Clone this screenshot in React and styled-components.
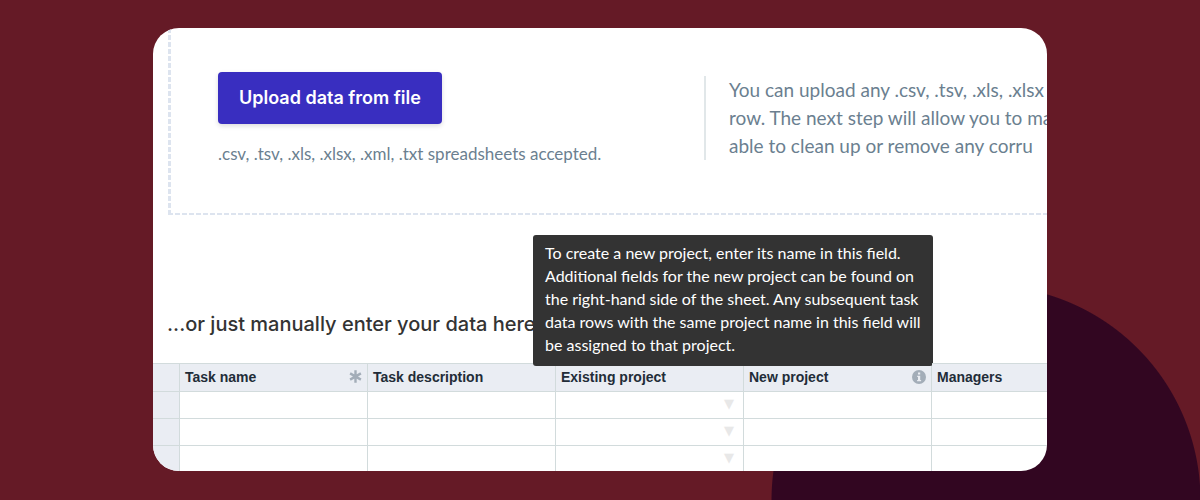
import React from 'react';
import styled, { createGlobalStyle } from 'styled-components';

const columns = [
    { name: 'Task name', required: true },
    { name: 'Task description' },
    { name: 'Existing project', select: true },
    {
        name: 'New project',
        info: 'To create a new project, enter its name in this field. Additional fields for the new project can be found on the right-hand side of the sheet. Any subsequent task data rows with the same project name in this field will be assigned to that project.',
    },
    { name: 'Managers' },
];

const rows = [1, 2, 3];

const AsteriskIcon = () => (
    <svg width="13" height="14" viewBox="0 0 13 14" aria-hidden="true">
        <path d="M6.500 0.300v12.400M1.100 3.400l10.800 6.200M11.900 3.400l-10.800 6.200" stroke="#a3adb8" strokeWidth="2.400" fill="none" />
    </svg>
);

const InfoIcon = () => (
    <svg width="14" height="14" viewBox="0 0 14 14" aria-hidden="true">
        <circle cx="7" cy="7" r="7" fill="#a3adb8" />
        <path d="M6 2.500h2.200v2H6zM5.200 5.700h3v4.300h.9v1.300H5.100V10h.9V7h-.8z" fill="#ebeef3" />
    </svg>
);

const App = () => (
    <Page>
        <GlobalStyle />
        <Card>
            <DropZone>
                <UploadColumn>
                    <UploadButton type="button">Upload data from file</UploadButton>
                    <Formats>.csv, .tsv, .xls, .xlsx, .xml, .txt spreadsheets accepted.</Formats>
                </UploadColumn>
                <Help>
                    You can upload any .csv, .tsv, .xls, .xlsx<br />
                    row. The next step will allow you to ma<br />
                    able to clean up or remove any corru
                </Help>
            </DropZone>
            <Heading>...or just manually enter your data here</Heading>
            <Sheet>
                <thead>
                    <tr>
                        <RowHead as="td" />
                        {columns.map(column => (
                            <ColumnHead key={column.name} scope="col">
                                <HeadContent>
                                    {column.name}
                                    {column.required && <AsteriskIcon />}
                                    {column.info && <InfoIcon />}
                                </HeadContent>
                                {column.info && <Tooltip role="tooltip">{column.info}</Tooltip>}
                            </ColumnHead>
                        ))}
                    </tr>
                </thead>
                <tbody>
                    {rows.map(row => (
                        <tr key={row}>
                            <RowHead as="td" />
                            {columns.map(column => (
                                <Cell key={column.name}>{column.select && '▼'}</Cell>
                            ))}
                        </tr>
                    ))}
                </tbody>
            </Sheet>
        </Card>
    </Page>
);

export default App;

const GlobalStyle = createGlobalStyle`
    body {
        margin: 0;
        background: #651a26;
    }
    * {
        box-sizing: border-box;
    }
`

const Page = styled.main`
    min-height: 100vh;
    padding: 28px 153px;
    background: radial-gradient(circle at calc(100% - 214px) 100%, #320621 214px, #651a26 215px);
    font-family: Inter, "Liberation Sans", sans-serif;
`

const Card = styled.section`
    overflow: hidden;
    border-radius: 26px;
    background: #fff;
`

const DropZone = styled.div`
    display: flex;
    align-items: flex-start;
    width: 1100px;
    height: 187px;
    margin-left: 15px;
    padding: 44px 48px;
    background:
        repeating-linear-gradient(to bottom, #dde4ef 0 5px, transparent 5px 7px) left / 3px 100% no-repeat,
        repeating-linear-gradient(to right, #dde4ef 0 5px, transparent 5px 7px) bottom / 100% 2px no-repeat;
`

const UploadColumn = styled.div`
    flex: 0 0 488px;
    padding-left: 2px;
`

const UploadButton = styled.button`
    height: 52px;
    padding: 0 21px;
    border: 0;
    border-radius: 4px;
    background: #392ec0;
    box-shadow: 0 2px 5px rgba(0, 0, 0, 0.14);
    color: #fff;
    font: 600 18px/24px Inter, sans-serif;
    white-space: nowrap;
`

const Formats = styled.p`
    margin: 18px 0 0;
    color: #6b7f90;
    font-family: Lato, sans-serif;
    font-size: 17px;
    line-height: 24px;
    white-space: nowrap;
`

const Help = styled.p`
    flex: none;
    margin: 4px 0 0;
    padding-left: 23px;
    border-left: 2px solid #e1e7e9;
    color: #6b7f90;
    font-family: Lato, sans-serif;
    font-size: 19px;
    line-height: 28px;
    white-space: nowrap;
`

const Heading = styled.h2`
    margin: 93px 0 23px 14px;
    color: #333;
    font-size: 20px;
    font-weight: 500;
    line-height: 32px;
`

const Sheet = styled.table`
    width: 967px;
    table-layout: fixed;
    border-spacing: 0;
`

const RowHead = styled.th`
    width: 27px;
    padding: 0;
    border-right: 1px solid #d2dbdc;
    border-top: 1px solid #d2dbdc;
    background: #eaedf3;
`

const ColumnHead = styled.th`
    position: relative;
    height: 28px;
    padding: 0 5px 2px;
    border-right: 1px solid #d2dbdc;
    border-top: 1px solid #d2dbdc;
    background: #eaedf3;
    color: #222c38;
    font: bold 14px/20px "Liberation Sans", sans-serif;
    text-align: left;
`

const HeadContent = styled.div`
    display: flex;
    align-items: center;
    justify-content: space-between;
`

const Tooltip = styled.div`
    position: absolute;
    right: -2px;
    bottom: calc(100% - 2px);
    width: 400px;
    padding: 6px 12px 10px;
    border-radius: 3px;
    background: #333;
    color: #fff;
    font: 400 16px/23px Lato, sans-serif;
`

const Cell = styled.td`
    height: 27px;
    padding: 0 9px 2px;
    border-right: 1px solid #d2dbdc;
    border-top: 1px solid #d2dbdc;
    color: #e8e8e8;
    font: 13px/20px "DejaVu Sans", sans-serif;
    text-align: right;

    tr:last-child > & {
        height: 26px;
    }
`
